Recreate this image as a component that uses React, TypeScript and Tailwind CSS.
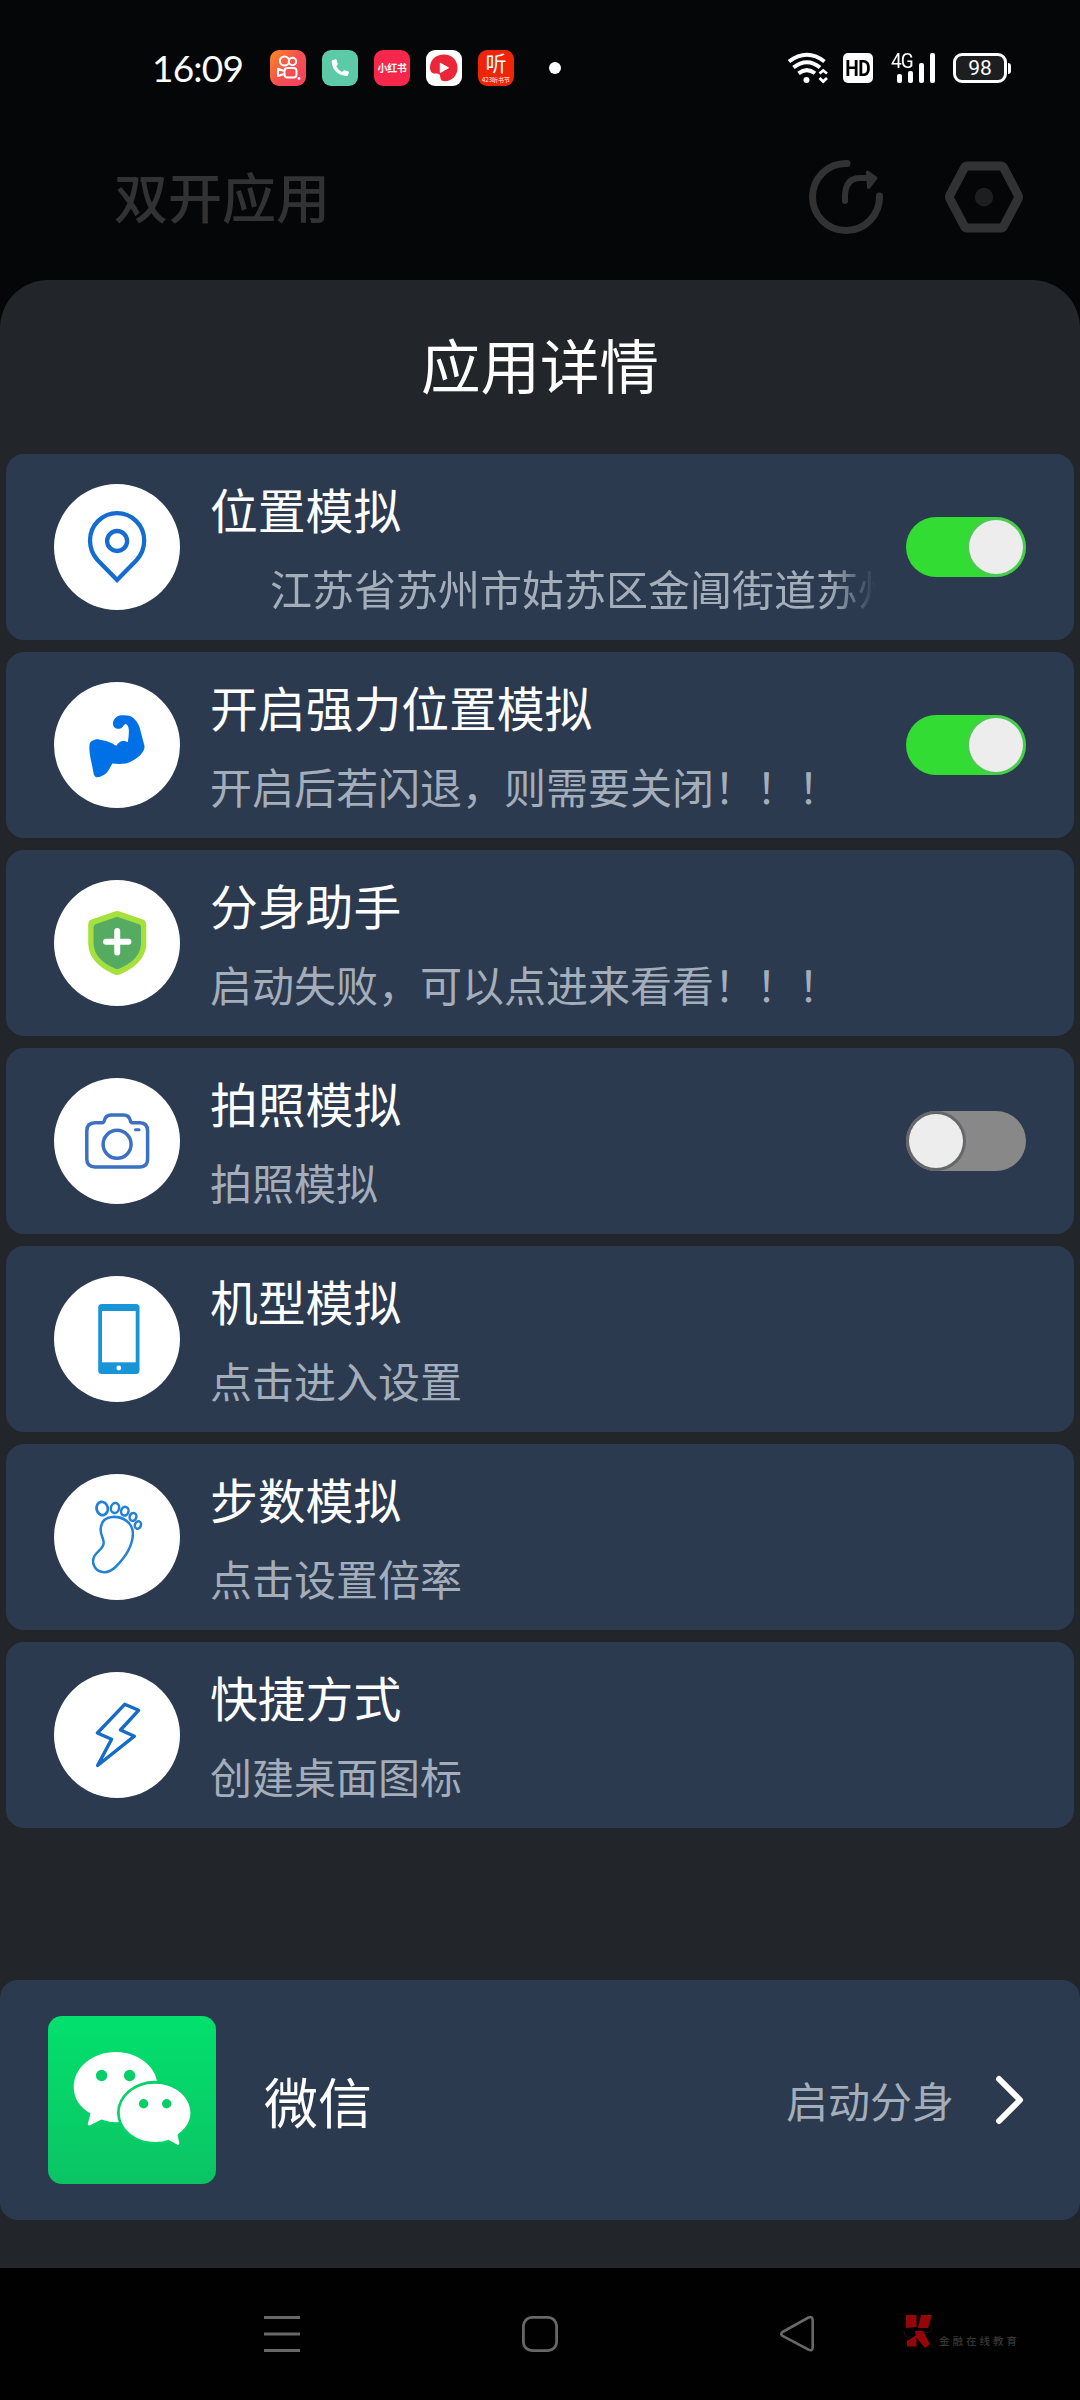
import React from "react";

const CJK = "font-['Noto_Sans_CJK_SC',sans-serif]";

function KuaishouIcon() {
  return (
    <svg viewBox="0 0 36 36" className="size-9 rounded-[9px]">
      <defs>
        <linearGradient id="ks" x1="0" y1="0" x2="1" y2="0.8">
          <stop offset="0" stopColor="#fb8a1e" />
          <stop offset="0.55" stopColor="#f5514f" />
          <stop offset="1" stopColor="#f2435f" />
        </linearGradient>
      </defs>
      <rect width="36" height="36" fill="url(#ks)" />
      <g fill="none" stroke="#fff" strokeWidth="2">
        <circle cx="14.5" cy="11" r="4.6" />
        <circle cx="22.5" cy="11.5" r="3.7" />
        <rect x="14.5" y="18" width="12" height="9.5" rx="3" />
        <path d="M14 21 L8 18.8 V26 L14 24" strokeLinejoin="round" />
      </g>
      <circle cx="29" cy="28.5" r="1.4" fill="#fff" />
    </svg>
  );
}

function PhoneAppIcon() {
  return (
    <svg viewBox="0 0 36 36" className="size-9 rounded-[9px]">
      <rect width="36" height="36" fill="#5cc9a7" />
      <path
        d="M10.3 10.2 L13.6 9.3 Q14.5 9.2 14.8 10 L15.7 14 Q15.8 14.8 14.2 16.2 Q16 20 20 21.9 Q21.6 20 22.3 20.2 L26.1 21.2 Q27 21.6 26.9 22.5 L26 25.3 Q25.7 26 24.5 26 Q16 25.5 11.5 18.5 Q9.7 15 9.7 11.4 Q9.7 10.4 10.3 10.2 Z"
        fill="#fff"
      />
    </svg>
  );
}

function VideoAppIcon() {
  return (
    <svg viewBox="0 0 36 36" className="size-9 rounded-[9px]">
      <rect width="36" height="36" fill="#fff" />
      <path
        d="M4 18 C4 9.5 10 4.5 18 4.5 C26 4.5 31.5 10 31.5 18 C31.5 25.5 26 31.2 18.5 31.2 C15 31.2 14.5 29 14.2 26.5 C13.8 23.5 12 23.5 9 23.5 C6 23.5 4 21.5 4 18 Z"
        fill="#ea2638"
      />
      <path d="M14.3 13.2 V22.5 L22.5 17.8 Z" fill="#fff" stroke="#fff" strokeWidth="1" strokeLinejoin="round" />
    </svg>
  );
}

function StatusBar() {
  return (
    <div className="flex h-[136px] items-center pl-[152px] pr-[69px] text-white">
      <span className="w-[118px] pb-[2px] font-['Lato'] text-[37px] leading-none tracking-[-0.8px]">16:09</span>
      <div className="flex items-center gap-4">
        <KuaishouIcon />
        <PhoneAppIcon />
        <div className={`flex size-9 items-center justify-center rounded-[9px] bg-[#f5274a] text-[10px] font-bold leading-none tracking-[-0.4px] ${CJK}`}>
          小红书
        </div>
        <VideoAppIcon />
        <div className={`flex size-9 flex-col items-center rounded-[9px] bg-[#ee2508] ${CJK}`}>
          <span className="h-[25px] text-[21px] leading-[25px]">听</span>
          <span className="whitespace-nowrap text-[6px] leading-[9px]">423听书节</span>
        </div>
      </div>
      <span className="ml-[35px] size-3 rounded-full bg-white" />
      <div className="ml-auto flex items-center">
        <svg width="42" height="32" viewBox="0 0 42 32" className="mr-[14px]" fill="none" stroke="#fff">
          <path d="M2 9.5 Q20 -4 37.5 9.5" strokeWidth="4" />
          <path d="M6.5 15.5 Q20 5 33 15.5" strokeWidth="4" />
          <path d="M11.5 21.3 Q20 15 28 21.3" strokeWidth="4" />
          <circle cx="19.5" cy="28" r="3" fill="#fff" stroke="none" />
          <path d="M32.5 21.5 L36.2 18.5 L40 21.5 M32.5 26 L36.2 29.5 L40 26" strokeWidth="2.8" />
        </svg>
        <span className="flex h-[30px] w-[30px] items-center justify-center rounded-[5px] bg-white text-black">
          <span className="scale-x-85 font-['Roboto'] text-[22.5px] font-bold leading-none tracking-[-0.5px]">HD</span>
        </span>
        <div className="relative ml-[18px] h-[30px] w-[46px]">
          <span className="absolute -top-px left-0 origin-left scale-x-95 font-['Roboto'] text-[20px] leading-[19px] tracking-[-1px]">
            4G
          </span>
          <div className="flex h-full items-end gap-[6px] pl-[6px]">
            <span className="h-[9px] w-[5px] rounded-[2px] bg-white" />
            <span className="h-[12px] w-[5px] rounded-[2px] bg-white" />
            <span className="h-[20px] w-[5px] rounded-[2px] bg-white" />
            <span className="h-[30px] w-[5px] rounded-[2px] bg-white" />
          </div>
        </div>
        <div className="ml-4 flex h-[30px] w-[54px] items-center justify-center rounded-[9px] border-[3px] border-white bg-[#1d1e20] font-['Roboto'] text-[21px] leading-none">
          98
        </div>
        <span className="ml-px h-[11px] w-[3px] rounded-r bg-white" />
      </div>
    </div>
  );
}

function AppHeader() {
  return (
    <div className="flex h-[144px] items-start pl-[114px] pr-[56px]">
      <h1 className={`mt-[20px] text-[54px] font-medium leading-[80px] text-[#323232] ${CJK}`}>双开应用</h1>
      <div className="ml-auto mt-[21px] flex gap-[58px]">
        <svg width="80" height="80" viewBox="806 157 80 80" fill="none" stroke="#323232" strokeLinecap="round">
          <path d="M847 163.500 A33.500 33.500 0 1 0 879.500 196" strokeWidth="7" />
          <path d="M845 201 V195 Q846 178 860 178 H869" strokeWidth="6" />
          <path d="M867.500 172 L876 178 L868.500 187.500 Z" fill="#323232" strokeWidth="3" strokeLinejoin="round" />
        </svg>
        <svg width="80" height="80" viewBox="944 157 80 80">
          <path
            d="M967 166 H1001 Q1002.500 166 1003.500 167.500 L1018 195 Q1019 197 1018 199 L1003.500 226.500 Q1002.500 228 1001 228 H967 Q965.500 228 964.500 226.500 L950 199 Q949 197 950 195 L964.500 167.500 Q965.500 166 967 166 Z"
            fill="none"
            stroke="#323232"
            strokeWidth="9"
          />
          <circle cx="984" cy="197" r="9.2" fill="#1e1e1e" />
        </svg>
      </div>
    </div>
  );
}

function Disc({ children }: { children: React.ReactNode }) {
  return (
    <svg viewBox="0 0 126 126" className="size-[126px] shrink-0 rounded-full bg-white" fill="none">
      {children}
    </svg>
  );
}

const PinGlyph = (
  <g stroke="#146cd0">
    <path d="M63.1 96 L43.5 76 Q36 67.5 36 56.5 A27.1 27.4 0 0 1 90.2 56.5 Q90.2 67.5 82.7 76 Z" strokeWidth="4.3" />
    <circle cx="63.1" cy="57" r="10" strokeWidth="4.3" />
  </g>
);

const MuscleGlyph = (
  <path
    d="M59 41 C59.5 37 63 33.5 67 33.3 C71 33 77 33.5 79 35.8 C82 38.5 84 41 85.5 45 L90.5 64 C91 68 87 73 83.5 75.5 C80 78.5 75 80.8 71.5 81.6 C66 82.3 62 82 58.5 81.5 C56.5 84 55.5 88 52.5 91 C49.5 93.5 46 95.3 43 95.3 C41 95.3 40 93.5 39.5 91 C38 81 34.5 72 35.6 62 C35.8 60 38 58.8 39.5 58.2 C41.5 57.2 43 57.3 45 57.4 C50 58.2 55 59.5 58 61.3 C60 62.5 61.5 64 62.8 63.2 C64 61.2 66 59.4 68.5 59 C70.5 58.7 72 59.4 73.8 60 C74.6 56 75 51 74.8 47.5 C74.5 44.5 73.5 42 71.5 42 C69.5 42.5 69.5 45.2 66.5 46.5 C62.5 47.7 58.5 45 59 41 Z"
    fill="#0070e6"
  />
);

const ShieldGlyph = (
  <g>
    <path
      d="M63.2 31 Q65 31 67 32 L89 39.6 Q92.3 41 92.3 45 V64 Q91.5 83 67 94 Q63.2 96 59.4 94 Q35 83 34.2 64 V45 Q34.2 41 37.5 39.6 L59.4 32 Q61.5 31 63.2 31 Z"
      fill="#a5e03c"
    />
    <path
      d="M63.2 36.8 L85 44.2 Q87 45 87 47 V64 Q86 80 65 88.7 Q63.2 89.4 61.4 88.7 Q40.5 80 39.6 64 V47 Q39.6 45 41.5 44.2 Z"
      fill="#55ab62"
    />
    <path d="M63.2 51 V72.4 M52 61.7 H74.4" stroke="#fff" strokeWidth="6" strokeLinecap="round" />
  </g>
);

const CameraGlyph = (
  <g stroke="#3c70c2" strokeWidth="3.5" strokeLinecap="round" strokeLinejoin="round">
    <path d="M41 44.7 Q32.8 44.7 32.8 53 V81 Q32.8 88.9 41 88.9 H86 Q93.6 88.9 93.6 81 V53 Q93.6 44.7 86 44.7 H78 Q76.8 44.7 76.5 43 Q75.3 37 69.5 37 H57 Q51.5 37 50.2 43 Q49.8 44.7 48 44.7 Z" />
    <circle cx="63.1" cy="66.3" r="14" />
    <path d="M81.5 51.8 H85" strokeWidth="3" />
  </g>
);

const PhoneGlyph = (
  <g>
    <rect x="44.2" y="28" width="41.3" height="70" rx="3.5" fill="#1895d6" />
    <rect x="48" y="35" width="33.7" height="51.3" fill="#fff" />
    <circle cx="64.8" cy="92" r="2.4" fill="#fff" />
  </g>
);

const FootGlyph = (
  <g stroke="#2482d4" strokeWidth="2.5">
    <path d="M58 43 C68 42 79 48 78.9 60 C78.5 75 68.500 86 62 92.500 C57 97.500 51 99 46.500 97.500 C40 95.500 37.500 88 40.200 82.500 C43 77 50 74.500 49.700 68.500 C49.500 63.500 46 60.500 46.700 54.500 C47.500 47 52 43.500 58 43 Z" />
    <ellipse cx="48.2" cy="34.5" rx="5.6" ry="6.7" strokeWidth="2.8" transform="rotate(-12 48 34.5)" />
    <ellipse cx="61" cy="34" rx="4.1" ry="5.1" transform="rotate(12 61 34)" />
    <ellipse cx="70.8" cy="37.2" rx="3.7" ry="4.4" transform="rotate(15 70.8 37.2)" />
    <ellipse cx="79" cy="42.9" rx="3.3" ry="4" transform="rotate(20 79 42.9)" />
    <ellipse cx="83.9" cy="51" rx="3" ry="3.8" transform="rotate(20 83.9 51)" />
  </g>
);

const BoltGlyph = (
  <path
    d="M70.7 32.3 L84.6 38.3 L66.5 58 L80.4 64.2 L43.6 93.5 L57.6 67.2 L43.4 61 Z"
    stroke="#146cc8"
    strokeWidth="3.4"
    strokeLinejoin="round"
  />
);

function Toggle({ on }: { on: boolean }) {
  return on ? (
    <span className="flex h-[60px] w-[120px] shrink-0 items-center justify-end rounded-full bg-[#33dc33] pr-[3px]">
      <span className="size-[54px] rounded-full bg-[#ededed] shadow-[0_0_0_3px_rgba(90,190,100,0.5)]" />
    </span>
  ) : (
    <span className="flex h-[60px] w-[120px] shrink-0 items-center rounded-full bg-[#888888] pl-[3px]">
      <span className="size-[54px] rounded-full bg-[#ededed] shadow-[0_0_0_3px_#66676a]" />
    </span>
  );
}

type Row = {
  title: string;
  sub: string;
  glyph: React.ReactNode;
  toggle?: boolean;
  scrolling?: boolean;
};

const rows: Row[] = [
  { title: "位置模拟", sub: "江苏省苏州市姑苏区金阊街道苏州", glyph: PinGlyph, toggle: true, scrolling: true },
  { title: "开启强力位置模拟", sub: "开启后若闪退，则需要关闭！！！", glyph: MuscleGlyph, toggle: true },
  { title: "分身助手", sub: "启动失败，可以点进来看看！！！", glyph: ShieldGlyph },
  { title: "拍照模拟", sub: "拍照模拟", glyph: CameraGlyph, toggle: false },
  { title: "机型模拟", sub: "点击进入设置", glyph: PhoneGlyph },
  { title: "步数模拟", sub: "点击设置倍率", glyph: FootGlyph },
  { title: "快捷方式", sub: "创建桌面图标", glyph: BoltGlyph },
];

function SettingCard({ row }: { row: Row }) {
  return (
    <div className="flex h-[186px] items-center rounded-[18px] bg-[#2c3a4f] pl-12 pr-12">
      <Disc>{row.glyph}</Disc>
      <div className="ml-[30px] flex w-[666px] flex-col whitespace-nowrap pt-[2px]">
        <span className="text-[47.8px] leading-[79px] text-white">{row.title}</span>
        {row.scrolling ? (
          <span className="overflow-hidden pl-[60px] text-[42px] leading-[79px] text-[#a4adba] [mask-image:linear-gradient(to_right,black_93%,transparent_100%)]">
            {row.sub}
          </span>
        ) : (
          <span className="text-[42px] leading-[79px] text-[#a4adba]">{row.sub}</span>
        )}
      </div>
      {row.toggle !== undefined && (
        <div className="ml-auto">
          <Toggle on={row.toggle} />
        </div>
      )}
    </div>
  );
}

function WeChatLogo() {
  return (
    <svg viewBox="0 0 168 168" className="size-[168px] shrink-0 rounded-[14px]">
      <defs>
        <linearGradient id="wx" x1="0" y1="0" x2="0" y2="1">
          <stop offset="0" stopColor="#02e06d" />
          <stop offset="1" stopColor="#0bc464" />
        </linearGradient>
      </defs>
      <rect width="168" height="168" fill="url(#wx)" />
      <path
        d="M67.7 36 C91 36 109.7 51.5 109.7 71 C109.7 91 91 106.3 67.7 106.3 C62.5 106.3 58 105.2 53.5 103.6 L41.5 109.4 Q39.5 110 39.8 107.8 L42.5 97.5 C31.5 91 25.7 82 25.7 71 C25.7 51.5 44.5 36 67.7 36 Z"
        fill="#fff"
      />
      <ellipse cx="107" cy="96.8" rx="38" ry="32" fill="#07d269" />
      <path
        d="M107 67.7 C126.5 67.7 142.4 80.5 142.4 96.8 C142.4 105.5 137.5 113 129.5 118.5 L131.3 127.2 Q131.3 129.3 129.5 128.7 L120.5 123.8 C116.5 125.3 112 126 107 126 C87.5 126 71.8 113 71.8 96.8 C71.8 80.5 87.5 67.7 107 67.7 Z"
        fill="#fff"
      />
      <g fill="#08cf68">
        <circle cx="53.6" cy="59.5" r="5.7" />
        <circle cx="81.6" cy="59.5" r="5.7" />
        <circle cx="95.6" cy="87.7" r="4.7" />
        <circle cx="118.7" cy="87.7" r="4.7" />
      </g>
    </svg>
  );
}

function LaunchCard() {
  return (
    <div className="flex h-[240px] items-center rounded-[18px] bg-[#2c3a4f] pl-12 pr-[53px]">
      <WeChatLogo />
      <span className="ml-12 pt-[2px] text-[54px] leading-none text-white">微信</span>
      <span className="ml-auto text-[42px] leading-none text-[#a4adba]">启动分身</span>
      <svg width="34" height="56" viewBox="0 0 34 56" className="ml-[39px]" fill="none">
        <path d="M6 7 L27 28 L6 49" stroke="#fff" strokeWidth="6" strokeLinecap="round" strokeLinejoin="round" />
      </svg>
    </div>
  );
}

function NavBar() {
  return (
    <div className="flex h-[132px] items-center bg-[#010101] pl-[262px]">
      <svg width="40" height="40" viewBox="0 0 40 40" stroke="#686868" strokeWidth="3">
        <path d="M2 3.500 H38 M2 20 H38 M2 36.500 H38" />
      </svg>
      <svg width="40" height="40" viewBox="0 0 40 40" className="ml-[218px]" fill="none" stroke="#686868" strokeWidth="2.8">
        <rect x="3.4" y="3.4" width="33.2" height="33.2" rx="8.5" />
      </svg>
      <svg width="40" height="40" viewBox="0 0 40 40" className="ml-[217px]" fill="none" stroke="#686868" strokeWidth="2.6">
        <path d="M5.5 18 L31.500 3.500 Q35.500 2.200 35.700 6 V33.500 Q35.500 37.600 31.500 35.700 L5.500 21.800 Q3 20 5.500 18 Z" strokeLinejoin="round" />
      </svg>
      <div className="ml-[84px] flex items-center">
        <svg width="34" height="40" viewBox="0 0 34 40" className="mr-[4px]">
          <path d="M5 1 H15.500 V13 L5 14 Z M20 1 H31 L27 14 L17 14 Z M6 27 L15.500 21 V32.500 H6 Z M14 17 H22 L29 30 L24 34 L15 23 Z" fill="#960507" />
          <path d="M3 17 Q3 24 10 23 M31 14 Q30 20 23 18" stroke="#241010" fill="none" />
        </svg>
        <span className="mt-[15px] whitespace-nowrap text-[10.5px] font-medium leading-none tracking-[3px] text-[#363636]">金融在线教育</span>
      </div>
    </div>
  );
}

export default function App() {
  return (
    <div className={`flex h-[2400px] w-[1080px] flex-col overflow-hidden bg-[#050608] ${CJK}`}>
      <StatusBar />
      <AppHeader />
      <section className="flex h-[1988px] flex-col rounded-t-[48px] bg-[#222529]">
        <h2 className="flex h-[174px] items-center justify-center pb-[7px] text-[59.5px] leading-none text-white">应用详情</h2>
        <div className="flex flex-col gap-3 px-[6px]">
          {rows.map((row) => (
            <SettingCard key={row.title} row={row} />
          ))}
        </div>
        <div className="mt-auto pb-12">
          <LaunchCard />
        </div>
      </section>
      <NavBar />
    </div>
  );
}
